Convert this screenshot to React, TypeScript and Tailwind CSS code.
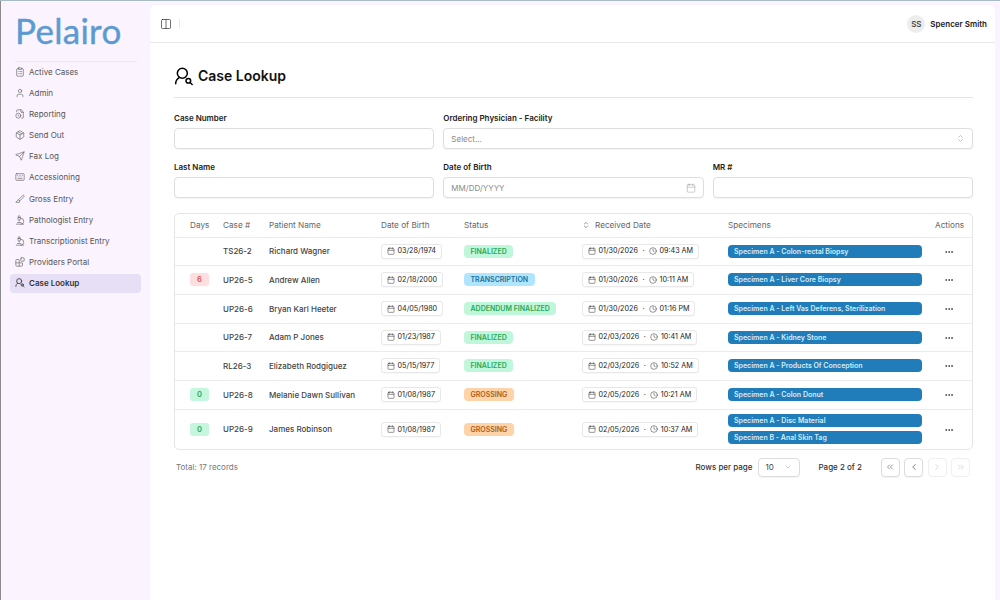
import React from "react";
import {
  ClipboardList, User, FileClock, Package, Send, Keyboard, Slice, Microscope, Blocks,
  Columns2, ChevronsUpDown, Calendar, Clock, Ellipsis, ChevronDown, ChevronsLeft, ChevronLeft, ChevronRight, ChevronsRight,
} from "lucide-react";

function CaseIcon({ size = 20, strokeWidth = 1.8, className }: { size?: number; strokeWidth?: number; className?: string }) {
  return (
    <svg width={size} height={size} viewBox="0 0 24 24" fill="none" stroke="currentColor" strokeWidth={strokeWidth} strokeLinecap="round" strokeLinejoin="round" className={className}>
      <circle cx="10" cy="7.5" r="6" />
      <path d="M2 20c0-3.5 2-6 4.5-7.6" />
      <circle cx="17.2" cy="16.5" r="2.8" />
      <path d="M19.3 18.6 21.8 21" />
    </svg>
  );
}

const nav = [
  { label: "Active Cases", Icon: ClipboardList },
  { label: "Admin", Icon: User },
  { label: "Reporting", Icon: FileClock },
  { label: "Send Out", Icon: Package },
  { label: "Fax Log", Icon: Send },
  { label: "Accessioning", Icon: Keyboard },
  { label: "Gross Entry", Icon: Slice },
  { label: "Pathologist Entry", Icon: Microscope },
  { label: "Transcriptionist Entry", Icon: Microscope },
  { label: "Providers Portal", Icon: Blocks },
  { label: "Case Lookup", Icon: CaseIcon, active: true },
];

type Row = {
  days?: string; tone?: "red" | "green"; id: string; name: string; dob: string;
  status: "FINALIZED" | "TRANSCRIPTION" | "ADDENDUM FINALIZED" | "GROSSING";
  date: string; time: string; specimens: string[]; h: string;
};

const rows: Row[] = [
  { id: "TS26-2", name: "Richard Wagner", dob: "03/28/1974", status: "FINALIZED", date: "01/30/2026", time: "09:43 AM", specimens: ["Specimen A - Colon-rectal Biopsy"], h: "h-[28px]" },
  { days: "6", tone: "red", id: "UP26-5", name: "Andrew Allen", dob: "02/18/2000", status: "TRANSCRIPTION", date: "01/30/2026", time: "10:11 AM", specimens: ["Specimen A - Liver Core Biopsy"], h: "h-[29px]" },
  { id: "UP26-6", name: "Bryan Karl Heeter", dob: "04/05/1980", status: "ADDENDUM FINALIZED", date: "01/30/2026", time: "01:16 PM", specimens: ["Specimen A - Left Vas Deferens, Sterilization"], h: "h-[29px]" },
  { id: "UP26-7", name: "Adam P Jones", dob: "01/23/1987", status: "FINALIZED", date: "02/03/2026", time: "10:41 AM", specimens: ["Specimen A - Kidney Stone"], h: "h-[28px]" },
  { id: "RL26-3", name: "Elizabeth Rodgiguez", dob: "05/15/1977", status: "FINALIZED", date: "02/03/2026", time: "10:52 AM", specimens: ["Specimen A - Products Of Conception"], h: "h-[29px]" },
  { days: "0", tone: "green", id: "UP26-8", name: "Melanie Dawn Sullivan", dob: "01/08/1987", status: "GROSSING", date: "02/05/2026", time: "10:21 AM", specimens: ["Specimen A - Colon Donut"], h: "h-[29px]" },
  { days: "0", tone: "green", id: "UP26-9", name: "James Robinson", dob: "01/08/1987", status: "GROSSING", date: "02/05/2026", time: "10:37 AM", specimens: ["Specimen A - Disc Material", "Specimen B - Anal Skin Tag"], h: "h-[40px]" },
];

function StatusBadge({ s }: { s: Row["status"] }) {
  const c =
    s === "TRANSCRIPTION" ? "bg-[#b0e6fd] text-[#20719f]" :
    s === "GROSSING" ? "bg-[#fed3a8] text-[#a9601c]" :
    "bg-[#c0f7da] text-[#2aa858]";
  return <span className={`inline-flex items-center h-[13px] px-[6.5px] rounded-[4px] text-[7px] font-semibold leading-none ${c}`}>{s}</span>;
}

function Chip({ children }: { children: React.ReactNode }) {
  return <span className="inline-flex items-center h-[15px] pl-[5px] pr-[5px] gap-[2.5px] rounded-[3px] border border-[#e8e8e8] bg-white text-[7.2px] text-[#222] leading-none whitespace-nowrap shadow-[0_1px_1px_rgba(0,0,0,0.03)]">{children}</span>;
}

function Field({ label, placeholder, right, className }: { label: string; placeholder?: string; right?: React.ReactNode; className?: string }) {
  return (
    <div className={`flex flex-col gap-[5px] ${className ?? ""}`}>
      <div className="text-[8px] leading-[10px] font-semibold text-[#222]">{label}</div>
      <div className="h-[21px] rounded-[4px] border border-[#dedede] bg-white shadow-[0_1px_1px_rgba(0,0,0,0.05)] flex items-center justify-between pl-[7px] pr-[7px] text-[8px] text-[#8a8a8a]">
        <span>{placeholder}</span>
        {right}
      </div>
    </div>
  );
}

function PageBtn({ children, disabled }: { children: React.ReactNode; disabled?: boolean }) {
  return (
    <div className={`w-[19px] h-[19px] rounded-[4px] border flex items-center justify-center bg-white ${disabled ? "border-[#efefef] text-[#b5b5b5]" : "border-[#dcdcdc] text-[#333] shadow-[0_1px_1px_rgba(0,0,0,0.05)]"}`}>
      {children}
    </div>
  );
}

export default function App() {
  return (
    <div className="w-[1000px] h-[600px] overflow-hidden flex flex-col bg-[#fbf3fe] text-[#222] font-['Inter',sans-serif]">
      <div className="h-[1px] bg-[#a9bcc4] shrink-0" />
      <div className="flex flex-1 min-h-0">
        <aside className="w-[150px] shrink-0 border-l border-[#8c8c8c] flex flex-col pl-[9px] pr-[9px]">
          <div className="h-[61px] border-b border-[#efe8f2] ml-[5px] mr-[4px] font-['Lato',sans-serif] text-[#5c9bd2] text-[35px] leading-[58px] tracking-[0.3px] [-webkit-text-stroke:0.4px_#5c9bd2] overflow-hidden">Pelairo</div>
          <nav className="flex flex-col">
            {nav.map(({ label, Icon, active }) => (
              <div key={label} className={`h-[19px] mb-[2.2px] rounded-[4px] flex items-center gap-[4px] pl-[5px] text-[8px] ${active ? "bg-[#e6dff6] font-semibold text-[#333]" : "text-[#555]"}`}>
                <Icon size={10} strokeWidth={active ? 2 : 1.4} className="shrink-0" />
                <span>{label}</span>
              </div>
            ))}
          </nav>
        </aside>

        <main className="flex-1 mt-[4px] mr-[5px] bg-white rounded-t-[6px] flex flex-col min-w-0">
          <header className="h-[38px] shrink-0 border-b border-[#e9e9e9] flex items-center justify-between pl-[10px] pr-[8px]">
            <div className="flex items-center gap-[7px]">
              <Columns2 size={12} strokeWidth={1.3} className="text-[#222]" />
              <div className="w-[1px] h-[9px] bg-[#e8e8e8]" />
            </div>
            <div className="flex items-center gap-[5px]">
              <div className="w-[18px] h-[18px] rounded-full bg-[#ededed] flex items-center justify-center text-[8px] text-[#333] font-medium">SS</div>
              <span className="text-[8px] font-semibold text-[#222]">Spencer Smith</span>
            </div>
          </header>

          <div className="pl-[24px] pr-[22px]">
            <div className="h-[55px] border-b border-[#e4e4e4] pt-[20px] flex items-start gap-[4px]">
              <CaseIcon size={20} strokeWidth={1.8} className="text-black mt-[4px]" />
              <h1 className="text-[14px] leading-[24px] font-semibold text-[#111] mt-[1px]">Case Lookup</h1>
            </div>

            <div className="grid grid-cols-3 gap-x-[9px] gap-y-[13px] mt-[15px]">
              <Field label="Case Number" />
              <Field label="Ordering Physician - Facility" placeholder="Select..." className="col-span-2" right={<ChevronsUpDown size={9} strokeWidth={1.3} className="text-[#888]" />} />
              <Field label="Last Name" />
              <Field label="Date of Birth" placeholder="MM/DD/YYYY" right={<Calendar size={10} strokeWidth={1.2} className="text-[#999]" />} />
              <Field label="MR #" />
            </div>

            <div className="mt-[15px] border border-[#e5e5e5] rounded-[5px] overflow-hidden">
              <table className="w-full table-fixed border-collapse text-[8px]">
                <colgroup>
                  <col className="w-[40px]" />
                  <col className="w-[46px]" />
                  <col className="w-[112px]" />
                  <col className="w-[83px]" />
                  <col className="w-[118px]" />
                  <col className="w-[146px]" />
                  <col className="w-[210px]" />
                  <col />
                </colgroup>
                <thead>
                  <tr className="h-[23px] text-[#666] text-left text-[8.2px]">
                    <th className="font-normal pl-[15px]">Days</th>
                    <th className="font-normal pl-[8px]">Case #</th>
                    <th className="font-normal pl-[8px]">Patient Name</th>
                    <th className="font-normal pl-[8px]">Date of Birth</th>
                    <th className="font-normal pl-[8px]">Status</th>
                    <th className="font-normal pl-[8px]">
                      <span className="flex items-center gap-[5px]"><ChevronsUpDown size={8} strokeWidth={1.5} className="text-[#333]" />Received Date</span>
                    </th>
                    <th className="font-normal pl-[8px]">Specimens</th>
                    <th className="font-normal pl-[5px]">Actions</th>
                  </tr>
                </thead>
                <tbody>
                  {rows.map((r) => (
                    <tr key={r.id} className={`${r.h} border-t border-[#ebebeb] text-[#444]`}>
                      <td className="pl-[15px]">
                        {r.days && (
                          <span className={`inline-flex items-center justify-center w-[19px] h-[13px] rounded-[3px] text-[7.5px] font-semibold ${r.tone === "red" ? "bg-[#fddfe0] text-[#d9534f]" : "bg-[#c4f7de] text-[#2aa858]"}`}>{r.days}</span>
                        )}
                      </td>
                      <td className="pl-[8px] font-medium">{r.id}</td>
                      <td className="pl-[8px] font-medium truncate">{r.name}</td>
                      <td className="pl-[8px]"><Chip><Calendar size={8} strokeWidth={1.4} />{r.dob}</Chip></td>
                      <td className="pl-[8px]"><StatusBadge s={r.status} /></td>
                      <td className="pl-[8px]">
                        <Chip>
                          <Calendar size={8} strokeWidth={1.4} />{r.date}
                          <span className="mx-[2px]">·</span>
                          <Clock size={8} strokeWidth={1.4} />{r.time}
                        </Chip>
                      </td>
                      <td className="pl-[8px] pr-[8px]">
                        <div className="flex flex-col gap-[4px]">
                          {r.specimens.map((s) => (
                            <div key={s} className="h-[13px] rounded-[4px] bg-[#207db9] text-[#d6ecf8] text-[7px] font-semibold leading-[13px] pl-[6px] truncate">{s}</div>
                          ))}
                        </div>
                      </td>
                      <td className="text-center pr-[5px]">
                        <Ellipsis size={10} strokeWidth={2} className="inline-block text-[#333]" />
                      </td>
                    </tr>
                  ))}
                </tbody>
              </table>
            </div>

            <div className="mt-[7px] h-[20px] flex items-center justify-between pl-[2px] pr-[3px]">
              <span className="text-[8px] text-[#777]">Total: 17 records</span>
              <div className="flex items-center">
                <span className="text-[8px] font-medium text-[#333]">Rows per page</span>
                <div className="ml-[5px] w-[42px] h-[19px] rounded-[4px] border border-[#dcdcdc] shadow-[0_1px_1px_rgba(0,0,0,0.05)] flex items-center justify-between px-[7px] text-[8px] text-[#444]">
                  <span>10</span><ChevronDown size={8} strokeWidth={1.2} className="text-[#888]" />
                </div>
                <span className="ml-[19px] w-[62px] text-[8px] font-medium text-[#333]">Page 2 of 2</span>
                <div className="flex items-center gap-[4.5px]">
                  <PageBtn><ChevronsLeft size={10} strokeWidth={1.2} /></PageBtn>
                  <PageBtn><ChevronLeft size={10} strokeWidth={1.5} /></PageBtn>
                  <PageBtn disabled><ChevronRight size={10} strokeWidth={1.2} /></PageBtn>
                  <PageBtn disabled><ChevronsRight size={10} strokeWidth={1.2} /></PageBtn>
                </div>
              </div>
            </div>
          </div>
        </main>
      </div>
    </div>
  );
}
